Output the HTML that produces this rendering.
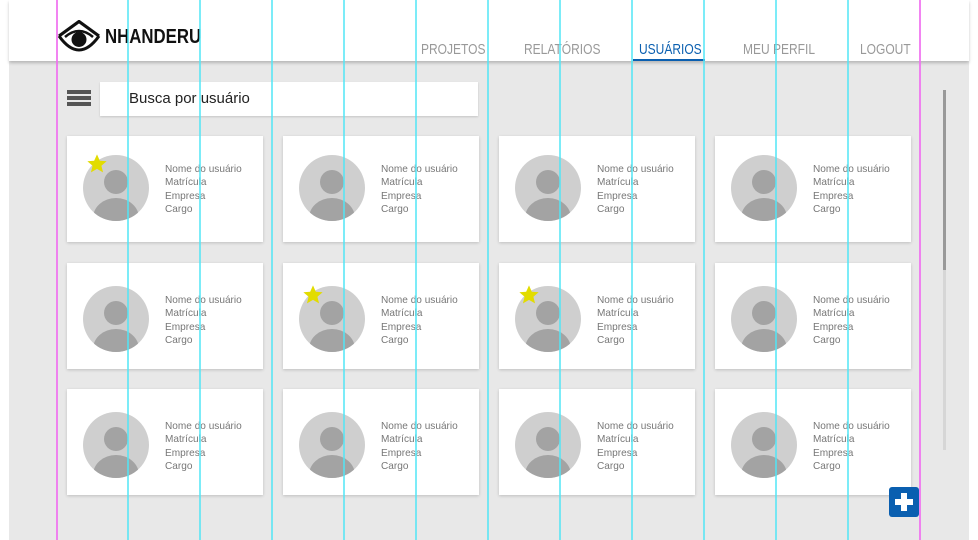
<!DOCTYPE html>
<html><head><meta charset="utf-8"><style>
*{margin:0;padding:0;box-sizing:border-box}
body{width:978px;height:540px;background:#fff;position:relative;overflow:hidden;font-family:"Liberation Sans",sans-serif}
.panel{position:absolute;left:9px;top:0;width:960px;height:540px;background:#e8e8e8}
.header{position:absolute;left:9px;top:0;width:960px;height:61px;background:#fff;box-shadow:0 2px 3px rgba(0,0,0,.22)}
.logo{position:absolute;left:105px;top:26px;font-weight:bold;font-size:20px;color:#111;transform:scaleX(.84);transform-origin:0 0}
.nav{position:absolute;top:41px;font-size:15px;color:#999;transform:scaleX(.8);transform-origin:0 0}
.nav.act{color:#0a5fb0}
.ul{position:absolute;left:633px;top:59px;width:72px;height:2px;background:#0a5fb0}
.search{position:absolute;left:100px;top:82px;width:378px;height:34px;background:#fff;box-shadow:0 1px 2px rgba(0,0,0,.15);font-size:15px;color:#222;padding:8px 0 0 29px}
.hb{position:absolute;left:67px;width:24px;height:4px;background:#555}
.card{position:absolute;width:196px;height:106px;background:#fff;box-shadow:0 1px 3px rgba(0,0,0,.18)}
.av{position:absolute;left:16px;top:19px;width:66px;height:66px;border-radius:50%;background:#cfcfcf;overflow:hidden}
.av .h{position:absolute;left:21px;top:15px;width:24px;height:24px;border-radius:50%;background:#a3a3a3}
.av .b{position:absolute;left:10px;top:43px;width:46px;height:40px;border-radius:50%;background:#a3a3a3}
.tx{position:absolute;left:98px;top:27px;font-size:10.5px;line-height:13.3px;color:#777;transform:scaleX(.96);transform-origin:0 0}
.r2 .av{top:23px}.r2 .tx{top:31px}
.star{position:absolute;left:19px;top:17px;width:22px;height:22px}
.r2 .star{top:21px}
.vl{position:absolute;top:0;width:2px;height:540px;background:rgba(80,230,245,.75)}
.ml{position:absolute;top:0;width:2px;height:540px;background:rgba(240,110,240,.85)}
</style></head><body>
<div class="panel"></div>
<div class="header"></div>
<svg style="position:absolute;left:57px;top:20px" width="45" height="32" viewBox="0 0 45 32">
<path d="M2 16 L22 1.5 L42 16" fill="none" stroke="#111" stroke-width="3.2" stroke-linejoin="miter"/>
<path d="M2 16 Q22 44 42 16" fill="none" stroke="#111" stroke-width="3"/>
<path d="M8 17 Q22 5 36 17" fill="none" stroke="#111" stroke-width="2.5"/>
<circle cx="22" cy="19.5" r="7.5" fill="#111"/>
</svg>
<div class="logo">NHANDERU</div>
<div class="nav" style="left:421px">PROJETOS</div>
<div class="nav" style="left:524px">RELATÓRIOS</div>
<div class="nav act" style="left:639px">USUÁRIOS</div>
<div class="nav" style="left:743px">MEU PERFIL</div>
<div class="nav" style="left:860px">LOGOUT</div>
<div class="ul"></div>
<div class="hb" style="top:90px"></div><div class="hb" style="top:96px"></div><div class="hb" style="top:102px"></div>
<div class="search">Busca por usuário</div>
<div style="position:absolute;left:943px;top:90px;width:3px;height:180px;background:#999"></div>
<div style="position:absolute;left:943px;top:270px;width:3px;height:180px;background:#d6d6d6"></div>

<div id="cards"></div>
<script>
var xs=[67,283,499,715],ys=[136,263,389],stars={"0,0":1,"1,1":1,"1,2":1},h="";
ys.forEach(function(y,r){xs.forEach(function(x,c){
h+='<div class="card'+(r>0?' r2':'')+'" style="left:'+x+'px;top:'+y+'px"><div class="av"><div class="h"></div><div class="b"></div></div><div class="tx">Nome do usuário<br>Matrícula<br>Empresa<br>Cargo</div>'+
(stars[r+","+c]?'<svg class="star" viewBox="0 0 24 24"><path d="M12 1.5l3.1 7 7.4.5-5.7 4.9 1.8 7.3L12 17.3l-6.6 3.9 1.8-7.3L1.5 9l7.4-.5z" fill="#e2dc00"/></svg>':'')+'</div>';});});
document.getElementById('cards').innerHTML=h;
</script>
<div style="position:absolute;left:889px;top:487px;width:30px;height:30px;background:#0a5fb0;border-radius:3px"></div>
<div style="position:absolute;left:895px;top:499px;width:18px;height:6px;background:#fff"></div>
<div style="position:absolute;left:901px;top:493px;width:6px;height:18px;background:#fff"></div>

<div class="ml" style="left:56px"></div><div class="ml" style="left:919px"></div>
<div class="vl" style="left:127px"></div><div class="vl" style="left:199px"></div><div class="vl" style="left:271px"></div>
<div class="vl" style="left:343px"></div><div class="vl" style="left:415px"></div><div class="vl" style="left:487px"></div>
<div class="vl" style="left:559px"></div><div class="vl" style="left:631px"></div><div class="vl" style="left:703px"></div>
<div class="vl" style="left:775px"></div><div class="vl" style="left:847px"></div>
</body></html>
